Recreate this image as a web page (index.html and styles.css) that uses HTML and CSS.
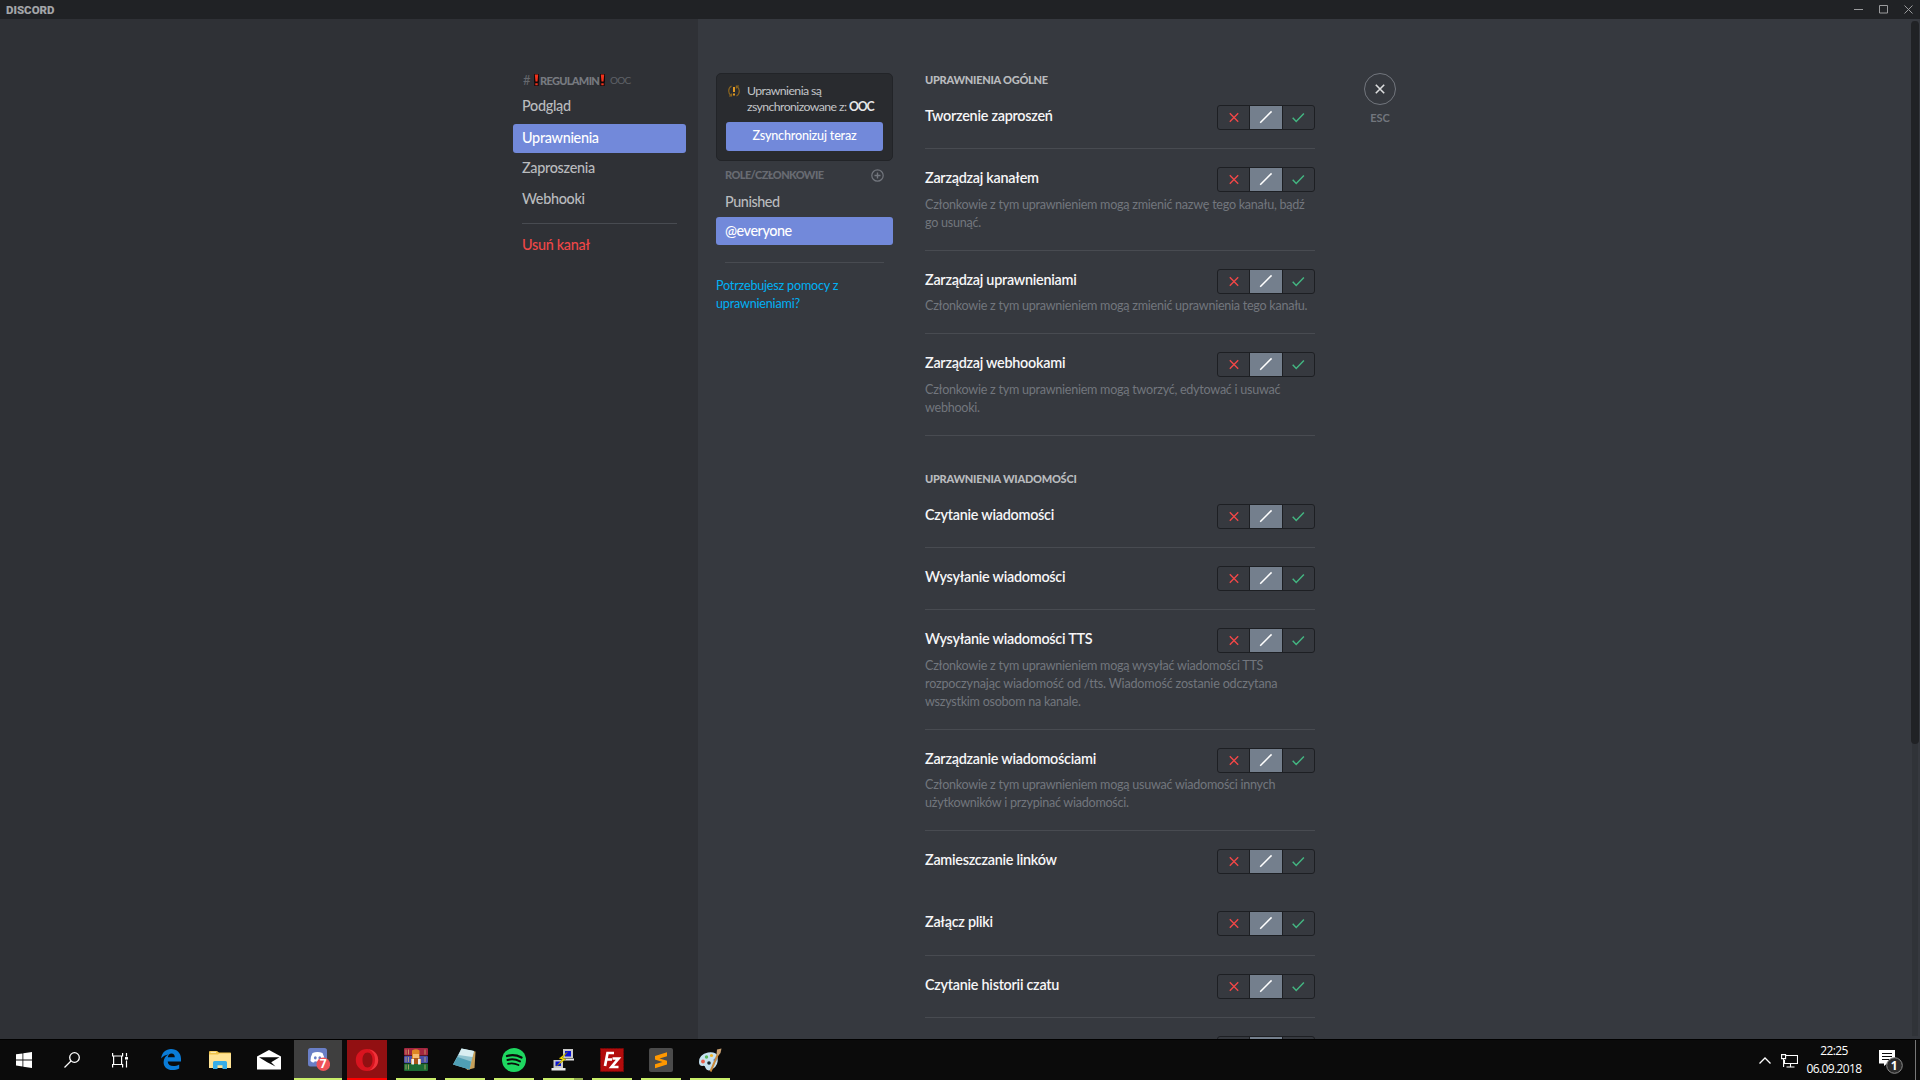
FILE: index.html
```html
<!DOCTYPE html>
<html lang="pl">
<head>
<meta charset="utf-8">
<title>Discord</title>
<link rel="stylesheet" href="styles.css">
</head>
<body>
<svg class="defs" width="0" height="0">
  <symbol id="toggle" viewBox="0 0 96 23">
    <rect x="32" width="32" height="23" fill="#747f8d"/>
    <path d="M31.5 0v23M64.5 0v23" stroke="#1d1f23"/>
    <path d="M11.800 7.200l8.400 8.600M20.200 7.200l-8.400 8.600" stroke="#f04747" stroke-width="1.400" fill="none"/>
    <path d="M42.200 16.800L53.600 5.400" stroke="#fff" stroke-width="1.500"/>
    <path d="M74.700 11.800l3.500 3.600 7.700-7.900" stroke="#43b581" stroke-width="1.500" fill="none"/>
  </symbol>
  <symbol id="bang" viewBox="0 0 5 12">
    <path d="M0 0h5v8.300h-5zM.3 8.300h4.400V12H.3z" fill="#14080a"/>
    <path d="M.8.5h3.400L3.500 7.500h-2zM1.300 9.200h2.400v2H1.300z" fill="#f0321c"/>
  </symbol>
</svg>
<header class="titlebar">
  <span class="wordmark">DISCORD</span>
  <svg class="winbtns" width="60" height="19" fill="none" stroke="#9a9b9d">
    <path d="M0 9.500h9M25.500 5.500h8v7.500h-8zM50.500 5.500l8 8M58.500 5.500l-8 8"/>
  </svg>
</header>
<main class="app">
  <nav class="sidebar">
    <div class="channel"><span class="hash">#</span><svg class="bang"><use href="#bang"/></svg><b>REGULAMIN</b><svg class="bang"><use href="#bang"/></svg><span class="category">OOC</span></div>
    <a class="nav-item">Podgląd</a>
    <a class="nav-item active">Uprawnienia</a>
    <a class="nav-item">Zaproszenia</a>
    <a class="nav-item">Webhooki</a>
    <hr class="rule">
    <a class="nav-item danger">Usuń kanał</a>
  </nav>
  <section class="content">
    <aside class="roles">
      <div class="sync">
        <div class="sync-msg">
          <svg width="12" height="12" fill="none" stroke="#8a641f" stroke-width="1.200"><path d="M3.500 1Q.7 2.500.7 6q0 3 2.500 4.800M8.500 11q2.800-1.500 2.800-5 0-3-2.500-4.800"/><path d="M1 11h2.600V8.500M11 1H8.400v2.500"/><path d="M6 2v5M6 8.500v2" stroke="#f5a623" stroke-width="1.800"/></svg>
          <p>Uprawnienia są<br>zsynchronizowane z: <b>OOC</b></p>
        </div>
        <button class="sync-btn">Zsynchronizuj teraz</button>
      </div>
      <div class="roles-head"><b>ROLE/CZŁONKOWIE</b><svg width="13" height="13" fill="none" stroke="#72767d" stroke-width="1.200"><circle cx="6.500" cy="6.500" r="5.700"/><path d="M6.500 3.500v6M3.500 6.500h6" stroke-width="1.400"/></svg></div>
      <a class="role">Punished</a>
      <a class="role active">@everyone</a>
      <hr class="rule">
      <a class="help">Potrzebujesz pomocy z<br>uprawnieniami?</a>
    </aside>
    <div class="perms">
      <h2>UPRAWNIENIA OGÓLNE</h2>
      <div class="perm"><h3>Tworzenie zaproszeń</h3><svg class="toggle"><use href="#toggle"/></svg></div>
      <div class="perm"><h3>Zarządzaj kanałem</h3><svg class="toggle"><use href="#toggle"/></svg>
        <p class="tall">Członkowie z tym uprawnieniem mogą zmienić nazwę tego kanału, bądź<br>go usunąć.</p></div>
      <div class="perm"><h3>Zarządzaj uprawnieniami</h3><svg class="toggle"><use href="#toggle"/></svg>
        <p>Członkowie z tym uprawnieniem mogą zmienić uprawnienia tego kanału.</p></div>
      <div class="perm"><h3>Zarządzaj webhookami</h3><svg class="toggle"><use href="#toggle"/></svg>
        <p class="tall">Członkowie z tym uprawnieniem mogą tworzyć, edytować i usuwać<br>webhooki.</p></div>
      <h2 class="second">UPRAWNIENIA WIADOMOŚCI</h2>
      <div class="perm"><h3>Czytanie wiadomości</h3><svg class="toggle"><use href="#toggle"/></svg></div>
      <div class="perm"><h3>Wysyłanie wiadomości</h3><svg class="toggle"><use href="#toggle"/></svg></div>
      <div class="perm"><h3>Wysyłanie wiadomości TTS</h3><svg class="toggle"><use href="#toggle"/></svg>
        <p class="tall">Członkowie z tym uprawnieniem mogą wysyłać wiadomości TTS<br><span class="airy">rozpoczynając wiadomość od /tts. Wiadomość zostanie odczytana</span><br>wszystkim osobom na kanale.</p></div>
      <div class="perm"><h3>Zarządzanie wiadomościami</h3><svg class="toggle"><use href="#toggle"/></svg>
        <p>Członkowie z tym uprawnieniem mogą usuwać wiadomości innych<br>użytkowników i przypinać wiadomości.</p></div>
      <div class="perm plain"><h3>Zamieszczanie linków</h3><svg class="toggle"><use href="#toggle"/></svg></div>
      <div class="perm loose"><h3>Załącz pliki</h3><svg class="toggle"><use href="#toggle"/></svg></div>
      <div class="perm"><h3>Czytanie historii czatu</h3><svg class="toggle"><use href="#toggle"/></svg></div>
      <div class="perm"><h3></h3><svg class="toggle"><use href="#toggle"/></svg></div>
    </div>
    <div class="close">
      <svg width="32" height="32" fill="none"><circle cx="16" cy="16" r="15.500" stroke="#72767d"/><path d="M11.800 11.800l8.400 8.400M20.200 11.800l-8.400 8.400" stroke="#dcddde" stroke-width="1.600"/></svg>
      <span>ESC</span>
    </div>
    <div class="scrollbar"><div class="thumb"></div></div>
  </section>
</main>
<footer class="taskbar">
  <div class="task"><svg width="16" height="16" fill="#fff"><path d="M0 2.300l6.500-.9v6.100H0zM7.300 1.300L16 0v7.500H7.300zM0 8.400h6.500v6.100L0 13.600zM7.300 8.400H16V16l-8.700-1.300z"/></svg></div>
  <div class="task"><svg width="16" height="16" fill="none" stroke="#fff" stroke-width="1.300"><circle cx="10.500" cy="5.500" r="4.800"/><path d="M7 9L.5 15.500"/></svg></div>
  <div class="task wide-gap"><svg width="16" height="16" fill="none" stroke="#fff" stroke-width="1.200"><path d="M.6 1v3h10V1M.6 15.500v-3h10v3M1.600 4.500v7.500M9.600 4.500v7.500M14.500 1v3.500M14.500 8.500v7"/><path d="M13 6.300h3" stroke-width="2.500"/></svg></div>
  <div class="task"><svg width="20" height="21"><path d="M.2 9.500C.8 3.500 5 0 10 0c6 0 10 4 10 9.800v2.700H6.700c.2 3 2.500 4.500 5.500 4.500 2.300 0 4.300-.6 6-1.600v4c-2 1-4.300 1.600-7 1.600-5 0-8.600-3-8.600-7.800 0-3.500 2-6.300 4.800-7.700C4.500 6 1.900 7.200.2 9.500zM6.800 8.300h7c0-2.300-1.200-3.900-3.300-3.900-2 0-3.400 1.600-3.700 3.900z" fill="#0a7cd8"/></svg></div>
  <div class="task"><svg width="22" height="18"><path d="M0 1Q0 0 1 0h7l2 1.500h11.200q.8 0 .8.800V17H0z" fill="#f0c34a"/><path d="M1.500.8h5.500v1H1.500z" fill="#fff4c8"/><path d="M0 3.500h9l1.500-1H22V17H0z" fill="#ffe394"/><path d="M4 18v-6.500q0-1.500 1.500-1.500h11q1.500 0 1.500 1.500V18h-4.500v-3.800h-5V18z" fill="#37aee8"/></svg></div>
  <div class="task"><svg width="24" height="20"><path d="M0 6.500L12 0l12 6.500V19.500H0z" fill="#fff"/><path d="M2 7.200h20.500l-8.300 5 4.300 4.300-8.300-4.300z" fill="#0b0b0b"/></svg></div>
  <div class="task run focused"><svg width="24" height="23"><rect x="2" width="19" height="18.500" rx="2.500" fill="#6a7fc6"/><path d="M6.500 5q5-2 10 0 2 3.500 2 8-1.500 1.500-3.500 1.500l-.8-1.200q-2.700.7-5.400 0L8 14.500q-2 0-3.500-1.500 0-4.500 2-8z" fill="#fff"/><ellipse cx="9.300" cy="9.800" rx="1.400" ry="1.600" fill="#6a7fc6"/><ellipse cx="13.800" cy="9.800" rx="1.400" ry="1.600" fill="#6a7fc6"/><circle cx="17.300" cy="16.200" r="6.800" fill="#ee5358"/><text x="17.300" y="20" text-anchor="middle" class="badge">7</text></svg></div>
  <div class="task run opera"><svg width="24" height="24"><path fill-rule="evenodd" d="M12 1C5.500 1 .8 5.700.8 12S5.500 23 12 23s11.200-4.700 11.200-11S18.500 1 12 1zM12.500 4.500c3.300 0 5 3.300 5 7.500s-1.700 7.500-5 7.500-5-3.300-5-7.500 1.700-7.500 5-7.500z" fill="#d8141f"/><path d="M14 1.500c5.500.7 9.200 5 9.200 10.500S19.500 21.800 14 22.500q6-3 6-10.500T14 1.500z" fill="#ff4a4f" opacity=".6"/></svg></div>
  <div class="task run"><svg width="24" height="23"><rect width="24" height="7.500" rx="1" fill="#a32640"/><rect y="8" width="24" height="7" rx="1" fill="#494fa8"/><rect y="15.500" width="24" height="7.500" rx="1" fill="#1c6b33"/><path d="M2 1.500v5M4.500 1.500v5M2 9v5M4.500 9v5M2 16.500v5M4.500 16.500v5M21 1.500v5M21 9v5M21 16.500v5" stroke="#d9bd73" opacity=".7"/><path d="M8 2.500Q12 0 15.500 2.500V11H17v5H7v-5h1z" fill="#dd8724"/><path d="M9 6h6v4H9z" fill="#f5bc72"/><path d="M7.500 11h2.500v5.500H7.500zM14 11h2.500v5.500H14z" fill="#eee"/><path d="M10 10h4v6h-4z" fill="#a8561a"/></svg></div>
  <div class="task run"><svg width="24" height="23"><path d="M8 1l14.500 2.500L21.500 20 14 22z" fill="#c6a05a"/><path d="M8.500.5L21 3l-4.500 18.500L0 16.500z" fill="#8fc3d0"/><path d="M8.500.5L21 3l-1.500 6L5.500 7z" fill="#d9eef2"/><path d="M4.500 9L18 13.500l-1.500 8L0 16.500z" fill="#4f9fb5"/></svg></div>
  <div class="task run"><svg width="24" height="24" fill="none" stroke="#0b0b0b" stroke-linecap="round"><circle cx="12" cy="12" r="12" fill="#1ed760" stroke="none"/><path d="M5 8q7.500-2.200 14.500 1.500" stroke-width="2.300"/><path d="M5.500 12q6.500-1.800 12.500 1.400" stroke-width="2"/><path d="M6 15.800q5.500-1.300 10.500 1.300" stroke-width="1.700"/></svg></div>
  <div class="task run more"><svg width="24" height="24"><path d="M12 1h10v9H12zM2.500 12h9.500v8H2.500z" fill="#c9c9c9"/><path d="M14 3h6v5.500h-6zM4.500 13.500h5.500V18H4.500z" fill="#0a14d8"/><path d="M11 10.500h12v2H11zM.5 20h14v2.500H.5z" fill="#e6e6e6"/><path d="M16.500 4L8 10.500l3.500 1L5.500 18 15 11l-3.500-1z" fill="#ffe800" stroke="#7a7000" stroke-width=".5"/></svg></div>
  <div class="task run"><svg width="24" height="24"><rect x=".5" y=".5" width="23" height="23" fill="#b30c0c" stroke="#7d0606" stroke-dasharray="2 1"/><path d="M5 18L7.500 5H14M6.500 11.500H12M12.500 10.500h6L11.500 19h7" fill="none" stroke="#fff" stroke-width="2.700"/></svg></div>
  <div class="task run"><svg width="24" height="24"><rect width="24" height="24" rx="2" fill="#4b4b4b"/><path d="M18 4.200v4L10.500 10.500 18 12.800v3.700L6 20.200v-4l7.500-2.300L6 11.500V7.900z" fill="#ff9800"/></svg></div>
  <div class="task run"><svg width="24" height="24"><path d="M1 14Q1 6.500 10 4.500q8-1 9.500 3.500Q21 18 14 21.500 9 24 7.500 20 7 17 4.500 18 1 18 1 14z" fill="#c6e2f0"/><circle cx="5" cy="13.500" r="1.900" fill="#e8604c"/><circle cx="8.500" cy="9" r="1.700" fill="#5ab85e"/><circle cx="13.500" cy="7.500" r="1.600" fill="#f0b428"/><circle cx="11" cy="15" r="1.800" fill="#1b2a30"/><circle cx="17" cy="12" r="1.500" fill="#3f74dd"/><path d="M12.500 23.500L20 6" stroke="#c98a3c" stroke-width="2"/><path d="M18.500 6.500L19 1.500l4.500-1L22.500 5l-2 2.500z" fill="#c8a071"/></svg></div>
  <div class="tray">
    <svg width="12" height="7" fill="none" stroke="#fff" stroke-width="1.300"><path d="M.5 6.500l5.500-5.500 5.500 5.500"/></svg>
    <svg width="17" height="14" fill="none" stroke="#fff" stroke-width="1.100"><path d="M5 1.500h11.500v8H3.500V6M.6.600h4v4h-4zM2.600 4.500v8.500M9.500 9.500v3.500M5.500 13h8"/></svg>
    <div class="clock">22:25<br>06.09.2018</div>
    <svg class="notes" width="25" height="25"><path d="M0 0h16v13.500H8L5 16v-2.500H0z" fill="#fff"/><path d="M3 3.500h10M3 6.500h10M3 9.500h7" stroke="#0b0b0b" stroke-width="1.200"/><circle cx="15.500" cy="15.500" r="7.800" fill="#2b2b2b" stroke="#8b8b8b"/><text x="15.300" y="19.700" text-anchor="middle" class="badge">1</text></svg>
    <div class="desk-edge"></div>
  </div>
</footer>
</body>
</html>
```
FILE: styles.css
```css
* { box-sizing: border-box; }
body { margin: 0; width: 1920px; height: 1080px; overflow: hidden; display: flex; flex-direction: column; background: #36393f; font-family: Lato, "Open Sans", sans-serif; color: #b9bbbe; letter-spacing: -.27px; }
svg { flex: none; display: block; }
.defs { position: absolute; }
h2, h3, p { margin: 0; white-space: nowrap; }
b { font-weight: 700; }

.titlebar { height: 19px; flex: none; background: #202225; display: flex; justify-content: space-between; align-items: center; padding: 0 6px; }
.wordmark { font: 900 11.500px/19px Roboto, sans-serif; letter-spacing: 0; color: #a3a5a8; padding-top: 1px; }

.app { height: 1020px; flex: none; display: flex; overflow: hidden; }
.sidebar { width: 698px; background: #2f3136; padding: 52px 0 0 513px; display: flex; flex-direction: column; }
.channel { display: flex; align-items: center; height: 18px; padding-left: 10px; margin-bottom: 3px; font-size: 11px; color: #72767d; letter-spacing: -.5px; }
.channel b { width: 60px; font-weight: 900; letter-spacing: -.68px; color: #777a80; }
.hash { width: 11px; font-size: 13px; color: #65686e; }
.bang { width: 5px; height: 12px; margin-right: 1px; }
.category { margin-left: 4px; font-size: 10px; letter-spacing: -.8px; color: #5f6268; }
.nav-item { display: block; width: 173px; height: 29px; line-height: 28px; padding-left: 9px; margin-bottom: 1.500px; border-radius: 3px; font-size: 14.400px; font-weight: 500; letter-spacing: -.3px; }
.active { background: #7289da; color: #fff; }
.nav-item.active { margin-top: 1px; }
.nav-item.danger { color: #f04747; }
.rule { border: 0; height: 1px; background: #484b51; margin: 8px 9px 7px; width: 155px; }

.content { flex: 1; display: flex; padding: 54px 1px 0 18px; }
.roles { width: 177px; flex: none; }
.sync { height: 88px; border: 1px solid #222428; border-radius: 5px; background: #292b2f; padding: 9px 9px 0 11px; }
.sync-msg { display: flex; gap: 7px; align-items: flex-start; font-size: 12.300px; line-height: 16px; letter-spacing: -.6px; color: #c2c4c7; }
.sync-msg svg { margin-top: 2px; }
.sync-msg b { color: #e6e7e8; letter-spacing: -1.200px; }
.sync-btn { display: block; width: 157px; height: 29px; margin: 7px 0 0 -2px; padding: 0 0 2px; border: 0; border-radius: 3px; background: #7289da; color: #fff; font: 500 12.600px Lato, sans-serif; letter-spacing: -.2px; }
.roles-head { display: flex; justify-content: space-between; align-items: center; height: 14px; margin: 7px 9px 6px; font-size: 11px; color: #72767d; }
.roles-head b { font-weight: 900; letter-spacing: -.6px; color: #686b72; margin-top: -1px; }
.role { display: block; height: 28px; line-height: 28px; padding-left: 9px; margin-bottom: 1px; border-radius: 3px; font-size: 14.400px; font-weight: 500; letter-spacing: -.45px; }
.roles .rule { width: 159px; margin: 17px 9px 14px; }
.help { display: block; font-size: 12.600px; line-height: 18px; color: #00b0f4; letter-spacing: -.2px; }

.perms { width: 390px; flex: none; margin-left: 32px; }
h2 { font-size: 11px; font-weight: 900; line-height: 14px; height: 32px; letter-spacing: -.25px; }
.second { margin-top: 36px; }
h3 { font-size: 14.400px; font-weight: 600; line-height: 22px; color: #f6f6f7; }
.perm { display: grid; grid-template-columns: 1fr 98px; padding-bottom: 18px; border-bottom: 1px solid #484b51; margin-bottom: 18px; }
.perm p { grid-column: 1 / 3; padding-top: 3px; font-size: 12.600px; line-height: 18px; color: #72767d; }
.perm .tall { padding-top: 4px; }
.airy { letter-spacing: -.19px; }
.plain { border-color: transparent; }
.loose { padding-bottom: 19px; }
.toggle { width: 98px; height: 25px; border: 1px solid #1d1f23; border-radius: 3px; }

.close { display: flex; flex-direction: column; align-items: center; width: 32px; margin-left: 49px; font-size: 11px; font-weight: 700; line-height: 14px; letter-spacing: 0; color: #72767d; }
.close span { margin-top: 6px; }
.scrollbar { width: 8px; height: 1015px; margin: -52px 0 0 auto; background: linear-gradient(90deg, transparent 1px, #303338 1px, #303338 7px, transparent 7px); }
.thumb { height: 723px; border-radius: 4px; background: #202225; }

.taskbar { height: 41px; flex: none; display: flex; background: #0b0b0b; border-top: 1px solid #000; letter-spacing: 0; }
.task { width: 48px; height: 40px; margin-right: 1px; padding-bottom: 1px; display: flex; align-items: center; justify-content: center; background-repeat: no-repeat; }
.task:nth-child(-n+2) { margin-right: 0; }
.wide-gap { margin-right: 3px; }
.run { background-image: linear-gradient(#c9ee6a, #c9ee6a); background-size: 40px 2px; background-position: 50% 100%; }
.focused { background-color: #3f3f3f; background-size: 100% 2px; }
.opera { background-image: linear-gradient(#921012 38px, #f00 38px); background-size: 40px 100%; }
.more { background-image: linear-gradient(90deg, #c9ee6a 31px, #94b04e 31px); }
.badge { font: 700 12px "Open Sans", sans-serif; fill: #fff; }
.tray { margin-left: auto; display: flex; align-items: center; color: #fff; }
.tray svg:nth-child(2) { margin: 1px 8px 0 10px; }
.clock { width: 56px; text-align: center; font: 12px/18px "Open Sans", sans-serif; letter-spacing: -.6px; white-space: nowrap; }
.notes { margin: 4px 11px 0 17px; }
.desk-edge { width: 1px; height: 40px; margin-right: 4px; background: #777; }
```
